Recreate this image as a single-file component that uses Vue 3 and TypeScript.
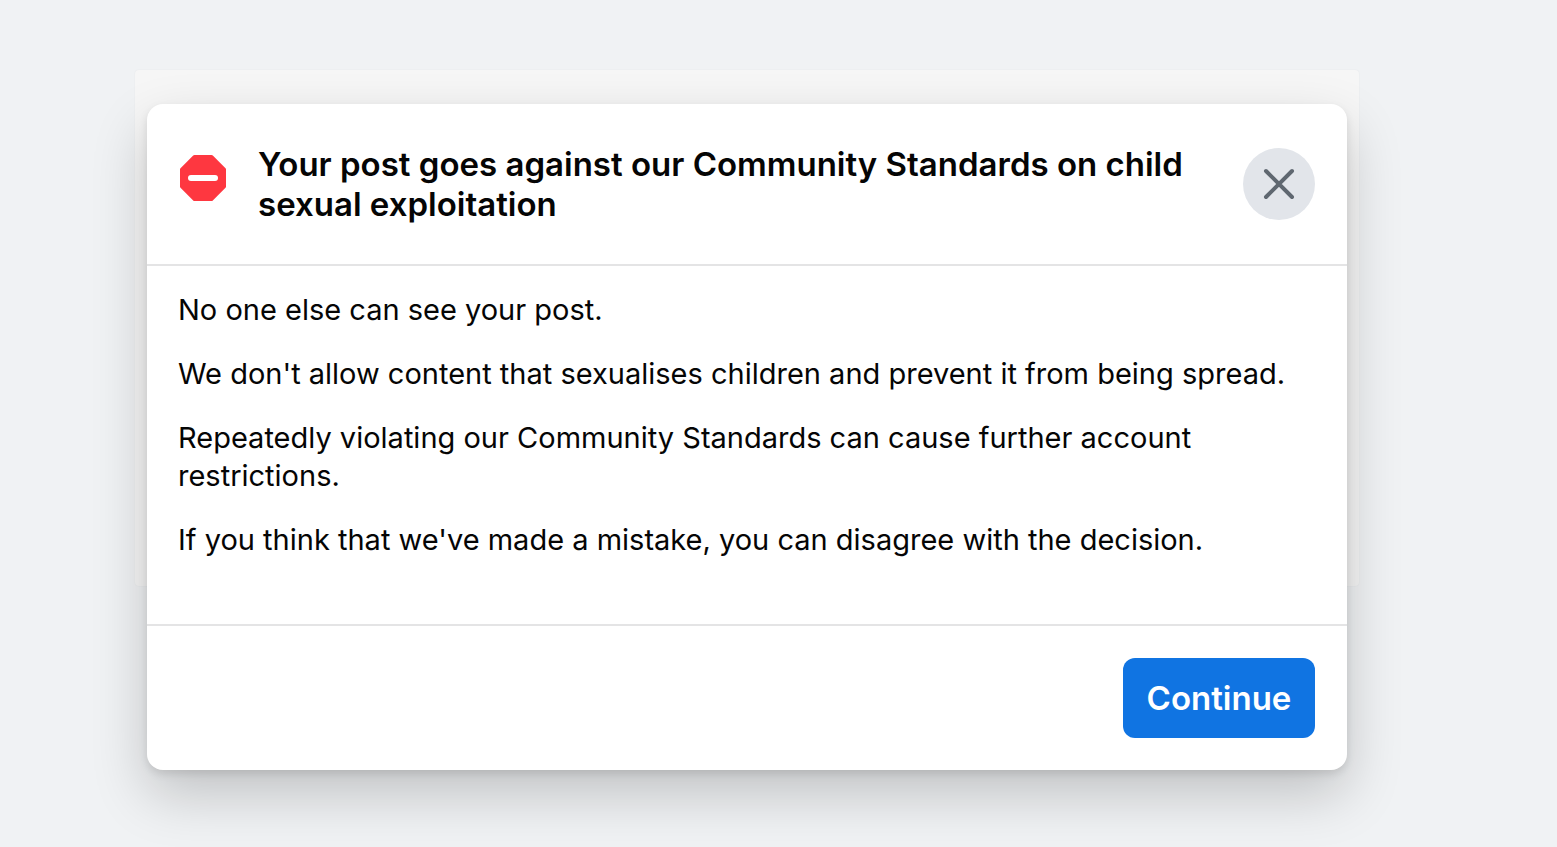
<script setup lang="ts">
import { ref } from 'vue'

const open = ref<boolean>(true)
const paragraphs: string[] = [
  'No one else can see your post.',
  "We don't allow content that sexualises children and prevent it from being spread.",
  'Repeatedly violating our Community Standards can cause further account restrictions.',
  "If you think that we've made a mistake, you can disagree with the decision.",
]

function close(): void {
  open.value = false
}
</script>

<template>
  <main class="page">
    <div class="backdrop-card">
      <section v-if="open" class="dialog" role="dialog" aria-labelledby="dialog-title">
        <header class="head">
          <svg class="stop" viewBox="0 0 46 46" aria-hidden="true">
            <path d="M14.500 0h17q.8 0 1.300.5L45.500 13.200q.5.5.5 1.300v17q0 .8-.5 1.300L32.800 45.500q-.5.5-1.300.5h-17q-.8 0-1.300-.5L.5 32.800Q0 32.300 0 31.500v-17q0-.8.5-1.300L13.200.5q.5-.5 1.300-.5z" fill="#fe3740" />
            <rect x="8" y="20" width="30" height="6" rx="3" fill="#fff" />
          </svg>
          <h1 id="dialog-title">Your post goes against our Community Standards on child sexual exploitation</h1>
          <button class="close" type="button" aria-label="Close" @click="close">
            <svg viewBox="0 0 72 72" aria-hidden="true">
              <path d="M23 23l26 26M49 23l-26 26" fill="none" stroke="#5f6770" stroke-width="4" stroke-linecap="round" />
            </svg>
          </button>
        </header>
        <div class="body">
          <p v-for="text in paragraphs" :key="text">{{ text }}</p>
        </div>
        <footer class="foot">
          <button class="continue" type="button" @click="close">Continue</button>
        </footer>
      </section>
    </div>
  </main>
</template>

<style>
body {
  background: #f0f2f4;
}
</style>

<style scoped>
.page {
  box-sizing: border-box;
  min-height: 100vh;
  padding: 70px 198px 0 135px;
  overflow: hidden;
  font-family: Inter, "Liberation Sans", sans-serif;
  color: #050505;
}
.backdrop-card {
  box-sizing: border-box;
  height: 516px;
  padding: 34px 12px 0;
  border-radius: 4px;
  background: #f6f6f6;
  box-shadow: 0 0 2px rgba(0, 0, 0, 0.06);
}
.dialog {
  border-radius: 16px;
  background: #fff;
  box-shadow: 0 24px 56px rgba(0, 0, 0, 0.2), 0 4px 8px rgba(0, 0, 0, 0.1);
}
.head {
  display: flex;
  align-items: flex-start;
  box-sizing: border-box;
  min-height: 162px;
  padding: 40px 32px 40px 33px;
  border-bottom: 2px solid #e4e4e5;
}
.stop {
  flex: none;
  width: 46px;
  height: 46px;
  margin-top: 11px;
}
h1 {
  flex: 1;
  margin: 0 56px 0 32px;
  font-size: 33px;
  line-height: 40px;
  font-weight: 600;
}
.close {
  flex: none;
  width: 72px;
  height: 72px;
  margin-top: 4px;
  padding: 0;
  border: 0;
  border-radius: 50%;
  background: #e2e5ea;
  cursor: pointer;
}
.close svg {
  display: block;
  width: 72px;
  height: 72px;
}
.body {
  box-sizing: border-box;
  min-height: 360px;
  padding: 25px 31px 0;
  border-bottom: 2px solid #e4e4e5;
}
p {
  margin: 0 0 26px;
  font-size: 29px;
  line-height: 38px;
}
.foot {
  display: flex;
  justify-content: flex-end;
  padding: 32px;
}
.continue {
  width: 192px;
  height: 80px;
  padding: 0;
  border: 0;
  border-radius: 12px;
  background: #1074e2;
  color: #fff;
  font: 600 33px/40px Inter, "Liberation Sans", sans-serif;
  cursor: pointer;
}
</style>
